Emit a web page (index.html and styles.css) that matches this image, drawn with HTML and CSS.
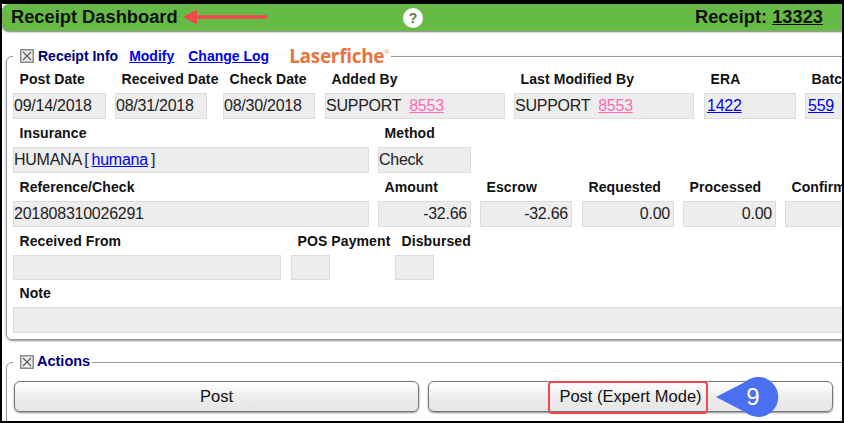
FILE: index.html
```html
<!DOCTYPE html>
<html lang="en">
<head>
<meta charset="utf-8">
<title>Receipt Dashboard</title>
<link rel="stylesheet" href="styles.css">
</head>
<body>
<div class="frame">
  <header class="topbar">
    <h1 class="title">Receipt Dashboard</h1>
    <span class="help">?</span>
    <div class="receipt">Receipt: <a href="#">13323</a></div>
  </header>

  <fieldset class="panel info">
    <legend class="legend">
      <svg class="check" viewBox="0 0 14 14"><rect x="0.75" y="0.75" width="12.5" height="12.5" fill="#eeeeee" stroke="#8a8a8a" stroke-width="1.5"/><path d="M3 3l8 8M11 3l-8 8" stroke="#555" stroke-width="1.1" fill="none"/></svg>
      <span class="legend-text">Receipt Info</span>
      <a class="legend-link first" href="#">Modify</a>
      <a class="legend-link second" href="#">Change Log</a>
      <span class="brand">Laserfiche<sup class="reg">®</sup></span>
    </legend>

    <div class="row">
      <div class="cell w93"><div class="lbl">Post Date</div><div class="fld">09/14/2018</div></div>
      <div class="cell w92"><div class="lbl">Received Date</div><div class="fld">08/31/2018</div></div>
      <div class="cell w92 ml16"><div class="lbl">Check Date</div><div class="fld">08/30/2018</div></div>
      <div class="cell w180 ml10"><div class="lbl">Added By</div><div class="fld">SUPPORT <a class="pink" href="#">8553</a></div></div>
      <div class="cell w180"><div class="lbl">Last Modified By</div><div class="fld">SUPPORT <a class="pink" href="#">8553</a></div></div>
      <div class="cell w92 ml10"><div class="lbl">ERA</div><div class="fld"><a class="blue inset" href="#">1422</a></div></div>
      <div class="cell w92"><div class="lbl">Batch</div><div class="fld"><a class="blue inset" href="#">559</a></div></div>
    </div>

    <div class="row">
      <div class="cell w356"><div class="lbl">Insurance</div><div class="fld tight">HUMANA [ <a class="blue" href="#">humana</a> ]</div></div>
      <div class="cell w93"><div class="lbl">Method</div><div class="fld">Check</div></div>
    </div>

    <div class="row">
      <div class="cell w356"><div class="lbl">Reference/Check</div><div class="fld">201808310026291</div></div>
      <div class="cell w93"><div class="lbl">Amount</div><div class="fld num">-32.66</div></div>
      <div class="cell w92"><div class="lbl">Escrow</div><div class="fld num">-32.66</div></div>
      <div class="cell w92 ml10"><div class="lbl">Requested</div><div class="fld num">0.00</div></div>
      <div class="cell w93"><div class="lbl">Processed</div><div class="fld num">0.00</div></div>
      <div class="cell w92"><div class="lbl">Confirmed</div><div class="fld num"></div></div>
    </div>

    <div class="row">
      <div class="cell w268"><div class="lbl">Received From</div><div class="fld short"></div></div>
      <div class="cell w39 ml10"><div class="lbl">POS Payment</div><div class="fld short"></div></div>
      <div class="cell w39 ml65"><div class="lbl">Disbursed</div><div class="fld short"></div></div>
    </div>

    <div class="row note">
      <div class="cell wfull"><div class="lbl">Note</div><div class="fld"></div></div>
    </div>
  </fieldset>

  <fieldset class="panel actions">
    <legend class="legend">
      <svg class="check" viewBox="0 0 14 14"><rect x="0.75" y="0.75" width="12.5" height="12.5" fill="#eeeeee" stroke="#8a8a8a" stroke-width="1.5"/><path d="M3 3l8 8M11 3l-8 8" stroke="#555" stroke-width="1.1" fill="none"/></svg>
      <span class="legend-text big">Actions</span>
    </legend>
    <div class="buttons">
      <button class="btn" type="button">Post</button>
      <button class="btn" type="button">Post (Expert Mode)</button>
    </div>
  </fieldset>

  <svg class="arrow" viewBox="0 0 88 18"><path d="M12 9H84" stroke="#f0484d" stroke-width="3.500" stroke-linecap="round" fill="none"/><path d="M1 9L15 1.500V16.500Z" fill="#f0484d"/></svg>
  <div class="highlight"></div>
  <div class="callout">
    <svg class="callout-shape" viewBox="0 0 64 40"><path d="M0 20L29 5A20 20 0 1 1 29 35Z" fill="#4a6ff0"/></svg>
    <span class="callout-num">9</span>
  </div>
</div>
</body>
</html>
```

FILE: styles.css
```css
* { box-sizing: border-box; }
html, body { margin: 0; padding: 0; }
body { width: 844px; height: 423px; overflow: hidden; font-family: "Liberation Sans", Arial, sans-serif; color: #111; }

.frame {
  position: relative;
  width: 844px;
  height: 423px;
  overflow: hidden;
  background: #fff;
  border-style: solid;
  border-color: #000;
  border-width: 4px 2px 2px 2px;
}

.topbar {
  display: flex;
  align-items: center;
  height: 27px;
  padding: 0 19px 1px 9px;
  background: #66bb47;
  border-radius: 7px 0 0 7px;
  box-shadow: 0 1px 2px #777;
  position: relative;
}
.title { margin: 0; font-size: 18.3px; font-weight: bold; color: #111; line-height: 26px; }
.help {
  position: absolute;
  left: 401px;
  top: 4px;
  width: 20px;
  height: 20px;
  border-radius: 50%;
  background: #fff;
  color: #5a7a50;
  font-size: 14px;
  font-weight: bold;
  line-height: 20px;
  text-align: center;
}
.receipt { margin-left: auto; font-size: 18.3px; font-weight: bold; }
.receipt a { color: #111; }

.panel {
  margin: 0;
  border: 1px solid #999;
  border-radius: 6px;
  width: 860px;
  background: #fff;
}
.info {
  margin-left: 4px;
  margin-top: 14px;
  height: 295px;
  padding: 0 0 0 6px;
  box-shadow: 0 1px 2px #888;
}
.actions {
  margin-left: 4px;
  margin-top: 11px;
  height: 80px;
  padding: 0 0 0 6px;
}

.legend {
  display: flex;
  align-items: center;
  height: 22px;
  margin-left: 0;
  padding: 0 2px 0 7px;
  white-space: nowrap;
}
.check { width: 14px; height: 14px; flex: none; }
.legend-text { margin-left: 4px; font-size: 14px; font-weight: bold; color: #000080; }
.legend-text.big { font-size: 14.5px; margin: 0 0 3px 3px; }
.legend-link { font-size: 14px; font-weight: bold; color: #0000ee; text-decoration: underline; }
.legend-link.first { margin-left: 11px; }
.legend-link.second { margin-left: 14px; }
.brand {
  margin-left: 20px;
  font-family: "Open Sans", "Noto Sans", sans-serif;
  font-size: 19px;
  font-weight: 700;
  line-height: 22px;
  color: #e8743f;
  letter-spacing: -0.3px;
}
.reg { font-size: 6px; color: #e8a080; vertical-align: 9px; line-height: 0; }

.row { display: flex; gap: 9px; margin-top: 7px; }
.row:first-of-type { margin-top: 5px; }
.row.note { margin-top: 6px; }
.cell { flex: none; }
.lbl {
  height: 21px;
  padding-left: 6.5px;
  font-size: 14px;
  font-weight: bold;
  line-height: 14px;
  letter-spacing: 0.1px;
  white-space: nowrap;
  color: #111;
}
.fld {
  height: 26px;
  padding: 0 3px 0 0;
  background: #ededed;
  border: 1px solid #dcdcdc;
  font-size: 16px;
  letter-spacing: -0.25px;
  line-height: 23px;
  white-space: nowrap;
  overflow: hidden;
  color: #222;
}
.fld.short { height: 25px; }
.fld.tight { word-spacing: -1px; }
.num { text-align: right; }
.pink { color: #ff69b4; margin-left: 4px; }
.blue { color: #0000ee; }
.inset { margin-left: 2px; }

.w39 { width: 39px; }
.w92 { width: 92px; }
.w93 { width: 93px; }
.w180 { width: 180px; }
.w268 { width: 268px; }
.w356 { width: 356px; }
.wfull { width: 840px; }
.ml10 { margin-left: 1px; }
.ml16 { margin-left: 7px; }
.ml65 { margin-left: 56px; }

.buttons { display: flex; gap: 9px; margin: 8px 0 0 1px; }
.btn {
  flex: none;
  width: 405px;
  height: 31px;
  padding: 0 0 1px;
  border: 1px solid #777;
  border-radius: 6px;
  background: linear-gradient(#ffffff, #ececec 55%, #e6e6e6);
  box-shadow: 0 1px 2px #888;
  font-family: "Liberation Sans", Arial, sans-serif;
  font-size: 16.5px;
  color: #111;
}

.arrow { position: absolute; left: 180px; top: 4px; width: 88px; height: 18px; }
.highlight {
  position: absolute;
  left: 546px;
  top: 377px;
  width: 160px;
  height: 33px;
  border: 2.500px solid #f0484d;
  border-radius: 4px;
}
.callout { position: absolute; left: 714px; top: 373px; width: 64px; height: 40px; }
.callout-shape { display: block; width: 64px; height: 40px; }
.callout-num {
  position: absolute;
  left: 0;
  width: 74px;
  top: 0;
  font-size: 24px;
  line-height: 40px;
  text-align: center;
  color: #fff;
}
```
